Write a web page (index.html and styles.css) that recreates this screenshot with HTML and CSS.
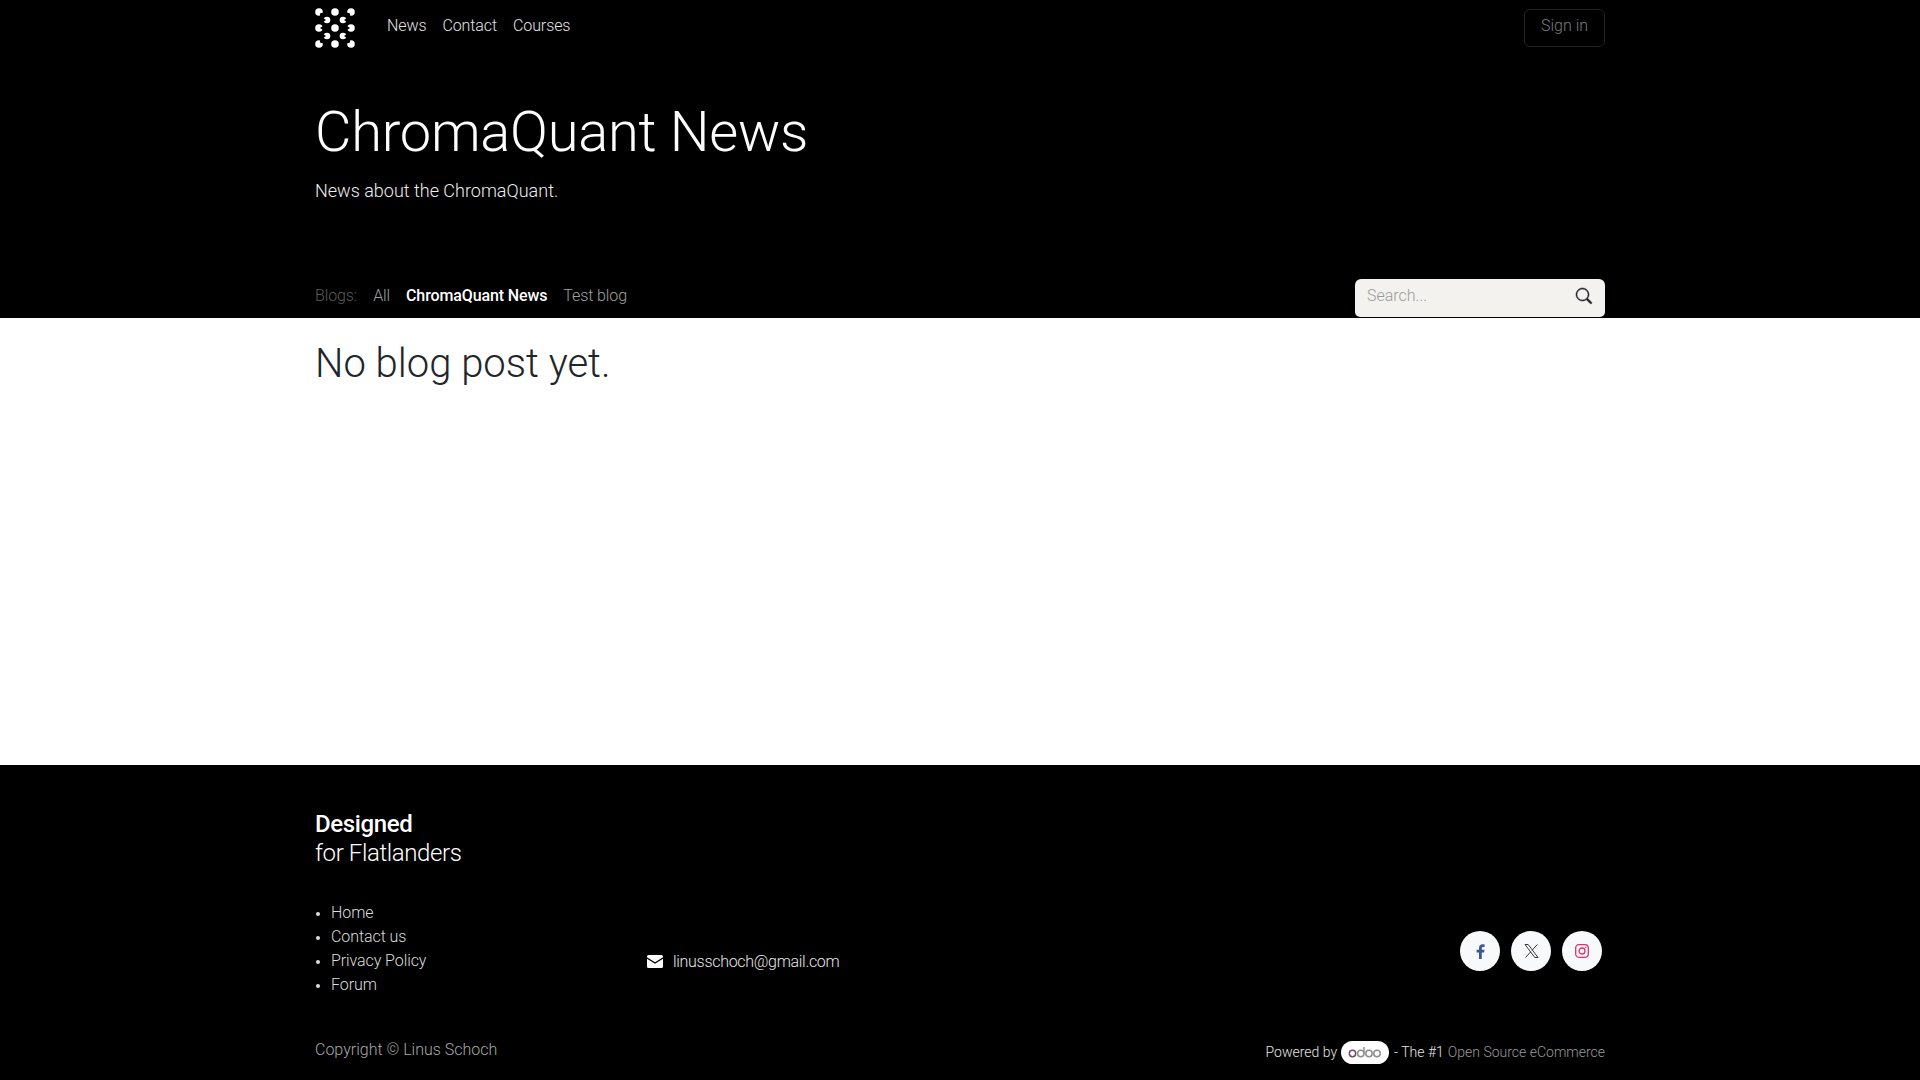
FILE: index.html
```html
<!DOCTYPE html>
<html lang="en">
<head>
<meta charset="utf-8">
<title>ChromaQuant News</title>
<link rel="stylesheet" href="styles.css">
</head>
<body>
<div class="page">
  <header class="hero">
    <div class="container">
      <nav class="topnav">
        <a class="logo" href="#" aria-label="ChromaQuant">
          <svg width="40" height="40" viewBox="0 0 40 40">
            <g fill="#fff">
              <circle cx="4" cy="4" r="3.8"/><circle cx="20" cy="4" r="3.8"/><circle cx="36" cy="4" r="3.8"/>
              <circle cx="4" cy="20" r="3.8"/><circle cx="20" cy="20" r="3.8"/><circle cx="36" cy="20" r="3.8"/>
              <circle cx="4" cy="36" r="3.8"/><circle cx="20" cy="36" r="3.8"/><circle cx="36" cy="36" r="3.8"/>
              <circle cx="12" cy="12" r="3.3"/><circle cx="28" cy="12" r="3.3"/>
              <circle cx="12" cy="28" r="3.3"/><circle cx="28" cy="28" r="3.3"/>
            </g>
            <g fill="#000">
              <path d="M8 4.800 5.200 5.200 4.800 8 8 8z"/><path d="M32 4.800 34.800 5.200 35.200 8 32 8z"/>
              <path d="M8 35.200 5.200 34.800 4.800 32 8 32z"/><path d="M32 35.200 34.800 34.800 35.200 32 32 32z"/>
              <path d="M8 18 5 20 8 22z"/><path d="M32 18 35 20 32 22z"/>
              <path d="M8 10 11 12 8 14z"/><path d="M32 10 29 12 32 14z"/>
              <path d="M8 26 11 28 8 30z"/><path d="M32 26 29 28 32 30z"/>
            </g>
          </svg>
        </a>
        <ul class="navlinks">
          <li><a href="#">News</a></li>
          <li><a href="#">Contact</a></li>
          <li><a href="#">Courses</a></li>
        </ul>
        <a class="signin" href="#">Sign in</a>
      </nav>
      <h1 class="title">ChromaQuant News</h1>
      <p class="lead">News about the ChromaQuant.</p>
      <div class="blogbar">
        <ul class="blogs">
          <li class="blogs-label">Blogs:</li>
          <li><a href="#">All</a></li>
          <li><a class="active" href="#">ChromaQuant News</a></li>
          <li><a href="#">Test blog</a></li>
        </ul>
        <form class="search">
          <span class="search-text">Search...</span>
          <svg class="search-icon" width="16" height="16" viewBox="0 0 16 16" fill="#212529"><path d="M11.740 10.340a6.500 6.500 0 1 0-1.400 1.400l3.850 3.850a1 1 0 0 0 1.400-1.410l-3.850-3.840zM12 6.500a5.500 5.500 0 1 1-11 0 5.500 5.500 0 0 1 11 0z"/></svg>
        </form>
      </div>
    </div>
  </header>
  <main class="main">
    <div class="container">
      <h2 class="empty">No blog post yet.</h2>
    </div>
  </main>
  <footer class="footer">
    <div class="container">
      <h5 class="tagline"><b>Designed</b><br>for Flatlanders</h5>
      <div class="footer-row">
        <ul class="footlinks">
          <li><a href="#">Home</a></li>
          <li><a href="#">Contact us</a></li>
          <li><a href="#">Privacy Policy</a></li>
          <li><a href="#">Forum</a></li>
        </ul>
        <div class="mail">
          <svg width="16" height="13" viewBox="0 0 16 13"><path fill="#fff" d="M1.500 0h13A1.500 1.500 0 0 1 16 1.500v.7L8 7.200 0 2.200v-.7A1.500 1.500 0 0 1 1.500 0zM0 3.800l8 5 8-5v7.700a1.500 1.500 0 0 1-1.500 1.500h-13A1.500 1.500 0 0 1 0 11.500z"/></svg>
          <a href="#">linusschoch@gmail.com</a>
        </div>
        <div class="social">
          <a class="social-btn" href="#" aria-label="Facebook"><svg width="9" height="15" viewBox="0 0 9 15"><path fill="#3b5998" d="M5.800 15V8.500h2.300l.4-2.700H5.800V4.200c0-.8.3-1.300 1.400-1.300h1.400V.4C8.300.3 7.500.2 6.600.2 4.500.2 3 1.500 3 3.900v1.900H.6v2.700H3V15z"/></svg></a>
          <a class="social-btn" href="#" aria-label="X"><svg width="15" height="14" viewBox="0 0 15 14"><path fill="none" stroke="#212529" stroke-width=".9" d="M1 .5h3.200l9.800 13h-3.200zM13.300.5 8.200 6.200M6.800 7.800 1.500 13.500"/></svg></a>
          <a class="social-btn" href="#" aria-label="Instagram"><svg width="14" height="14" viewBox="0 0 14 14"><g fill="none" stroke="#e1306c" stroke-width="1.300"><rect x=".7" y=".7" width="12.600" height="12.600" rx="3.200"/><circle cx="7" cy="7" r="3"/></g><circle cx="10.700" cy="3.300" r=".8" fill="#e1306c"/></svg></a>
        </div>
      </div>
      <div class="legal">
        <span class="copyright">Copyright © Linus Schoch</span>
        <span class="powered"><span>Powered by</span><span class="odoo"><svg width="34" height="13" viewBox="0 0 34 13"><g fill="none" stroke-width="1.500"><circle cx="4.500" cy="7.500" r="3.200" stroke="#714b67"/><circle cx="12.800" cy="7.500" r="3.200" stroke="#8f8f8f"/><path d="M16 1v6.500" stroke="#8f8f8f"/><circle cx="21" cy="7.500" r="3.200" stroke="#8f8f8f"/><circle cx="29" cy="7.500" r="3.200" stroke="#8f8f8f"/></g></svg></span><span class="dash">- The #1</span><a href="#">Open Source eCommerce</a></span>
      </div>
    </div>
  </footer>
</div>
</body>
</html>
```
FILE: styles.css
```css
* { box-sizing: border-box; }
html, body { margin: 0; padding: 0; }
body {
  font-family: Roboto, "Liberation Sans", Arial, sans-serif;
  font-weight: 300;
  font-size: 16px;
  line-height: 24px;
  color: #212529;
  background: #fff;
}
a { color: inherit; text-decoration: none; }
ul { list-style: none; margin: 0; padding: 0; }
.page { display: flex; flex-direction: column; height: 1080px; overflow: hidden; }
.container { width: 1320px; margin: 0 auto; padding: 0 15px; }

.hero { background: #000; color: #fff; height: 318px; }
.topnav { display: flex; align-items: flex-start; padding-top: 8px; height: 82px; }
.logo { display: block; width: 40px; height: 40px; }
.logo svg { display: block; }
.navlinks { display: flex; gap: 16px; margin-left: 32px; padding-top: 6px; color: #e3e3e3; letter-spacing: -.1px; }
.signin {
  margin-left: auto; margin-top: 1px;
  width: 81px; height: 38px; border: 1px solid #222; border-radius: 6px;
  color: #7b7b7b; text-align: center; line-height: 32px;
}
.title { margin: 17px 0 0; font-size: 56px; line-height: 67px; font-weight: 300; letter-spacing: -.24px; }
.lead { margin: 11px 0 0; font-size: 18px; line-height: 27px; color: #eee; }
.blogbar { display: flex; justify-content: space-between; align-items: flex-start; margin-top: 75px; }
.blogs { display: flex; gap: 16px; padding-top: 5px; color: #a0a0a0; letter-spacing: -.1px; }
.blogs-label { color: #5c5c5c; }
.blogs .active { color: #fff; font-weight: 500; letter-spacing: -.12px; }
.search {
  display: flex; align-items: center; justify-content: space-between;
  width: 250px; height: 38px; padding: 0 13px 4px 12px;
  background: #f3f2ef; border-radius: 6px 6px 5px 5px;
}
.search-text { color: #9a9a9a; }
.search-icon { stroke: #212529; stroke-width: .5; overflow: visible; }

.main { flex: 1; }
.empty { margin: 22px 0 0; font-size: 40px; line-height: 48px; font-weight: 300; }

.footer { background: #000; color: #fff; height: 315px; }
.tagline { margin: 0; padding-top: 45px; font-size: 24px; line-height: 29px; font-weight: 300; letter-spacing: -.38px; }
.tagline b { font-weight: 500; }
.footer-row { display: grid; grid-template-columns: 332px 1fr auto; align-items: center; margin-top: 33px; }
.footlinks { list-style: disc; padding-left: 16px; color: #dcdcdc; letter-spacing: -.08px; }
.footlinks li::marker { font-size: 13px; }
.mail { display: flex; align-items: center; gap: 10px; padding-top: 25px; color: #e6e6e6; letter-spacing: -.3px; }
.social { display: flex; gap: 11px; padding: 4px 3px 0 0; }
.social-btn {
  display: flex; align-items: center; justify-content: center;
  width: 40px; height: 40px; border-radius: 50%; background: #f8f9fa;
}
.legal { display: flex; justify-content: space-between; align-items: center; margin-top: 38px; }
.copyright { color: #a8a8a8; }
.powered { display: flex; align-items: center; gap: 4px; padding-top: 5px; font-size: 14px; color: #e6e6e6; white-space: pre; }
.powered a { color: #9a9a9a; }
.dash { margin-left: 1px; }
.odoo {
  display: inline-flex; align-items: center; justify-content: center;
  width: 48px; height: 23px; border-radius: 12px; background: #fff;
}
```
